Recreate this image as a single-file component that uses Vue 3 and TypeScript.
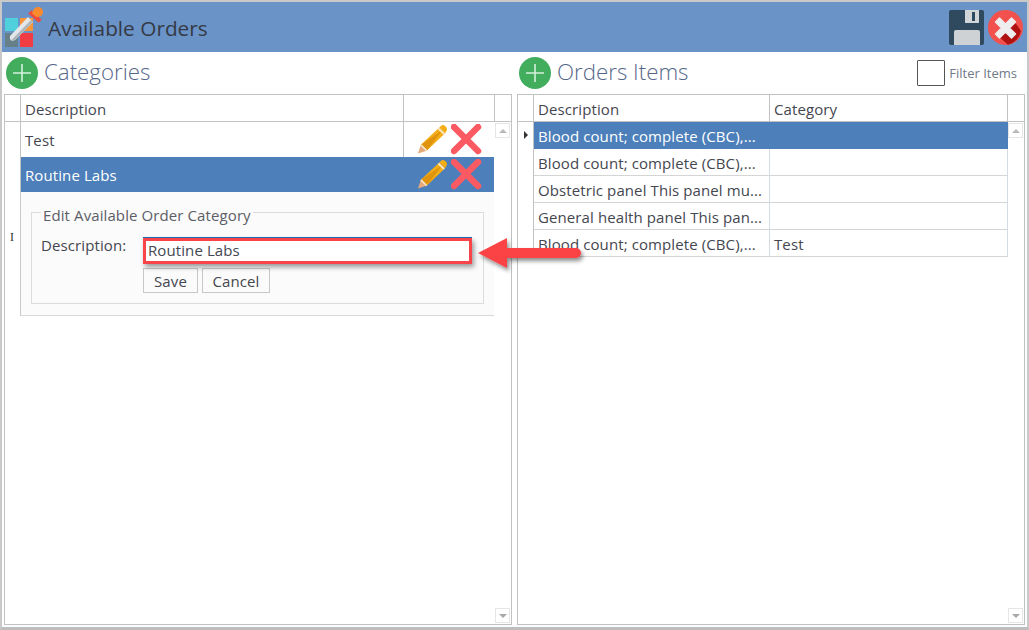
<script setup lang="ts">
const categories = ['Test', 'Routine Labs']
const orders = [
  { d: 'Blood count; complete (CBC),...', c: '', sel: true },
  { d: 'Blood count; complete (CBC),...', c: '', sel: false },
  { d: 'Obstetric panel This panel mu...', c: '', sel: false },
  { d: 'General health panel This pan...', c: '', sel: false },
  { d: 'Blood count; complete (CBC),...', c: 'Test', sel: false },
]
</script>

<template>
  <div class="window">
    <header class="titlebar">
      <svg class="logo" width="42" height="44" viewBox="0 0 42 44">
        <rect x="3" y="13" width="13" height="13" fill="#4fd0dc" />
        <rect x="18" y="13" width="13" height="13" fill="#f9953a" />
        <rect x="3" y="28" width="13" height="14" fill="#66808a" />
        <rect x="18" y="28" width="13" height="14" fill="#f23c44" />
        <path d="M8 31 L26 12 L31 17 L13 35 Q10 36.500 8.500 35 Q7.500 33 8 31 Z" fill="#e4e7ea" />
        <path d="M29 15 L31 17 L13 35 Q10.500 36.300 9 35.500 Z" fill="#aeb6bc" />
        <path d="M27 8 L39 15" stroke="#ee4b3e" stroke-width="4.500" transform="rotate(12 33 11.500)" />
        <circle cx="36" cy="7" r="5" fill="#f98a2d" />
        <path d="M29.500 8 L35 2.500 L40 8 L35 12 Z" fill="#f98a2d" />
      </svg>
      <h1 class="app-title">Available Orders</h1>
      <div class="title-actions">
        <svg width="36" height="35" viewBox="0 0 36 35">
          <path d="M2 0 H33 A2 2 0 0 1 35 2 V33 A2 2 0 0 1 33 35 H2 A2 2 0 0 1 0 33 V2 A2 2 0 0 1 2 0 Z" fill="#2f4a5e" />
          <rect x="16" y="0" width="14" height="13" fill="#d3d6d8" />
          <rect x="23" y="2" width="3" height="9" fill="#2f4a5e" />
          <path d="M5 35 V22 Q5 20 7 20 H29 Q31 20 31 22 V35 Z" fill="#cfd2d4" />
        </svg>
        <svg width="35" height="35" viewBox="0 0 35 35">
          <circle cx="17.500" cy="17.500" r="17.500" fill="#f2514e" />
          <path d="M24 8 L33 21 A17.500 17.500 0 0 1 20 34.800 L9 25 Z" fill="#b01212" />
          <path d="M11.500 8 L17.500 14 L23.500 8 L27.500 12 L21.500 18 L27.500 24 L23.500 28 L17.500 22 L11.500 28 L7.500 24 L13.500 18 L7.500 12 Z" fill="#eeeeee" stroke="#eeeeee" stroke-width="1.500" stroke-linejoin="round" />
        </svg>
      </div>
    </header>

    <main class="panels">
      <section class="panel">
        <div class="panel-head">
          <svg class="add" width="32" height="32" viewBox="0 0 32 32">
            <circle cx="16" cy="16" r="16" fill="#41ad5d" />
            <path d="M16 7 V25 M7 16 H25" stroke="#d5efdc" stroke-width="1.600" />
          </svg>
          <h2 class="panel-title">Categories</h2>
        </div>
        <div class="grid">
          <div class="grid-body">
            <div class="head-row cat-cols">
              <div class="indicator"></div>
              <div class="hcell">Description</div>
              <div class="hcell"></div>
              <div class="hcell last"></div>
            </div>
            <div
              v-for="(c, i) in categories"
              :key="c"
              class="cat-row"
              :class="{ selected: i === 1 }"
            >
              <div class="indicator plain"></div>
              <div class="cat-text">{{ c }}</div>
              <div class="cat-actions" :class="{ divided: i === 0 }">
                <svg width="31" height="31" viewBox="0 0 32 31">
                  <path d="M1 30 L4 21 L10 27 Z" fill="#e5a97c" />
                  <path d="M4 21 L23 3 L29 9 L10 27 Z" fill="#f3ad16" />
                  <path d="M4 21 L26 6 L10 27 Z" fill="#e0930c" />
                  <path d="M23 3 L25.500 0.800 Q27 0 28.500 1 L30.500 3 Q31.500 5 30.500 6.500 L29 9 Z" fill="#f3ad16" />
                  <path d="M22 4 L28 10" stroke="#f7e8c8" stroke-width="2" />
                  <path d="M4 21 L10 27" stroke="#f7e8c8" stroke-width="1.600" />
                </svg>
                <svg width="31" height="31" viewBox="0 0 31 31">
                  <path d="M3 3 L27 27 M27 3 L3 27" stroke="#fb5a62" stroke-width="6.500" stroke-linecap="round" />
                </svg>
              </div>
              <div class="cat-spacer"></div>
            </div>
            <div class="detail">
              <fieldset class="edit-box">
                <legend>Edit Available Order Category</legend>
                <div class="edit-form">
                  <label class="edit-label" for="desc">Description:</label>
                  <div class="edit-fields">
                    <input id="desc" class="edit-input" value="Routine Labs" />
                    <div class="edit-buttons">
                      <button class="btn save">Save</button>
                      <button class="btn cancel">Cancel</button>
                    </div>
                  </div>
                </div>
              </fieldset>
            </div>
          </div>
          <div class="scrollbar">
            <span class="sbtn"><i class="tri up"></i></span>
            <span class="sbtn"><i class="tri down"></i></span>
          </div>
        </div>
      </section>

      <section class="panel">
        <div class="panel-head">
          <svg class="add" width="32" height="32" viewBox="0 0 32 32">
            <circle cx="16" cy="16" r="16" fill="#41ad5d" />
            <path d="M16 7 V25 M7 16 H25" stroke="#d5efdc" stroke-width="1.600" />
          </svg>
          <h2 class="panel-title">Orders Items</h2>
          <label class="filter">
            <span class="check"></span>
            <span>Filter Items</span>
          </label>
        </div>
        <div class="grid">
          <div class="grid-body">
            <div class="head-row order-cols">
              <div class="indicator"></div>
              <div class="hcell">Description</div>
              <div class="hcell">Category</div>
              <div class="hcell last"></div>
            </div>
            <div
              v-for="(o, i) in orders"
              :key="i"
              class="order-row order-cols"
              :class="{ selected: o.sel }"
            >
              <div class="indicator plain">
                <i v-if="o.sel" class="current"></i>
              </div>
              <div class="ocell">{{ o.d }}</div>
              <div class="ocell">{{ o.c }}</div>
            </div>
          </div>
          <div class="scrollbar">
            <span class="sbtn"><i class="tri up"></i></span>
            <span class="sbtn"><i class="tri down"></i></span>
          </div>
        </div>
      </section>
    </main>

    <!-- annotation overlay -->
    <span class="ibeam">I</span>
    <div class="callout-box"></div>
    <svg class="callout-arrow" width="120" height="44" viewBox="0 0 120 44">
      <defs>
        <filter id="sh" x="-10%" y="-20%" width="125%" height="160%">
          <feDropShadow dx="2" dy="3" stdDeviation="2" flood-color="#000" flood-opacity="0.45" />
        </filter>
      </defs>
      <path d="M4 19 L33 4 V14 H102 A5 5 0 0 1 102 24 H33 V34 Z" fill="#fb4245" filter="url(#sh)" />
    </svg>
  </div>
</template>

<style>
html, body { margin: 0; padding: 0; background: #fff; }
</style>

<style scoped>
.window {
  position: relative;
  width: 1029px;
  height: 630px;
  box-sizing: border-box;
  border: 2px solid #c9c9c9;
  border-bottom: 3px solid #bdbdbd;
  background: #fff;
  overflow: hidden;
  display: flex;
  flex-direction: column;
  font-family: "Open Sans", "Noto Sans", sans-serif;
  color: #44474f;
}
.titlebar {
  height: 50px;
  flex: none;
  background: #6a93c8;
  display: flex;
  align-items: center;
}
.logo { flex: none; margin: 0 4px 0 0; }
.app-title {
  margin: 1px 0 0;
  font-size: 20.800px;
  font-weight: 400;
  color: #353a44;
}
.title-actions {
  margin-left: auto;
  display: flex;
  align-items: center;
  gap: 3px;
  padding: 1px 4px 0 0;
}
.panels {
  flex: 1;
  min-height: 0;
  display: flex;
  gap: 5px;
  padding: 0 0 2px 2px;
}
.panel {
  width: 508px;
  flex: none;
  display: flex;
  flex-direction: column;
}
.panel-head {
  height: 42px;
  flex: none;
  display: flex;
  align-items: center;
  padding-left: 2px;
}
.add { flex: none; }
.panel-title {
  margin: -4px 0 0 6px;
  font-size: 22.300px;
  font-weight: 300;
  color: #56688a;
}
.filter {
  margin-left: auto;
  display: flex;
  align-items: center;
  gap: 4px;
  font-size: 13px;
  color: #6f7a88;
  padding-right: 8px;
}
.check {
  width: 26px;
  height: 24px;
  border: 1px solid #555;
  border-radius: 1px;
  background: #fff;
}
.grid {
  flex: 1;
  min-height: 0;
  border: 1px solid #c2c2c2;
  display: flex;
  position: relative;
}
.grid-body { flex: 1; min-width: 0; display: flex; flex-direction: column; }
.head-row {
  height: 27px;
  flex: none;
  display: flex;
  box-sizing: border-box;
  border-bottom: 1px solid #c2c2c2;
}
.indicator { width: 15px; flex: none; border-right: 1px solid #c2c2c2; box-sizing: content-box; }
.indicator.plain { position: relative; }
.hcell {
  box-sizing: border-box;
  padding: 4px 0 0 4px;
  font-size: 15px;
  letter-spacing: 0.1px;
  line-height: 20px;
  border-right: 1px solid #c2c2c2;
  white-space: nowrap;
}
.cat-cols .hcell:nth-child(2) { width: 383px; }
.cat-cols .hcell:nth-child(3) { width: 91px; }
.hcell.last { flex: 1; border-right: none; }
.cat-row {
  height: 35px;
  flex: none;
  display: flex;
  align-items: stretch;
  font-size: 15px;
  letter-spacing: 0.1px;
}
.cat-text { width: 383px; box-sizing: border-box; padding: 8px 0 0 4px; line-height: 20px; }
.cat-actions {
  width: 90px;
  box-sizing: border-box;
  display: flex;
  align-items: center;
  padding-left: 13px;
  gap: 3px;
}
.cat-actions.divided { border-left: 1px solid #c2c2c2; margin-left: -1px; width: 91px; }
.cat-row.selected .cat-text,
.cat-row.selected .cat-actions { background: #4d7fba; color: #fff; }
.detail {
  height: 124px;
  width: 474px;
  margin-left: 15px;
  flex: none;
  box-sizing: border-box;
  background: #fbfbfb;
  border-left: 1px solid #c9c9c9;
  border-bottom: 1px solid #d8d8d8;
  padding: 7px 10px 0 10px;
}
.edit-box {
  margin: 0;
  padding: 0 0 0 9px;
  height: 105px;
  box-sizing: border-box;
  border: 1px solid #dcdcdc;
  min-width: 0;
}
.edit-box legend {
  margin-left: 0;
  padding: 6px 2px 0;
  font-size: 15px;
  letter-spacing: 0.1px;
  line-height: 20px;
  color: #5b5e66;
}
.edit-form { display: flex; }
.edit-label {
  width: 102px;
  flex: none;
  font-size: 15px;
  line-height: 20px;
  padding-top: 10px;
  letter-spacing: 0.1px;
}
.edit-fields { display: flex; flex-direction: column; gap: 4px; padding-top: 12px; }
.edit-input {
  width: 329px;
  height: 27px;
  box-sizing: border-box;
  border: none;
  border-top: 2px solid #1f6fc0;
  padding: 0 0 3px 5px;
  margin: 0;
  background: #fff;
  font: inherit;
  font-size: 15px;
  letter-spacing: 0.1px;
  color: #44474f;
  outline: none;
}
.edit-buttons { display: flex; gap: 4px; }
.btn {
  height: 25px;
  box-sizing: border-box;
  border: 1px solid #c8c8c8;
  background: #fbfbfb;
  font: inherit;
  font-size: 15px;
  letter-spacing: 0.1px;
  line-height: 20px;
  color: #44474f;
  padding: 0;
}
.btn.save { width: 55px; }
.btn.cancel { width: 68px; }
.scrollbar {
  position: absolute;
  right: 1px;
  top: 28px;
  bottom: 1px;
  width: 15px;
  display: flex;
  flex-direction: column;
  justify-content: space-between;
}
.sbtn {
  width: 15px;
  height: 15px;
  box-sizing: border-box;
  border: 1px solid #e6e6e6;
  display: flex;
  align-items: center;
  justify-content: center;
  background: #fff;
}
.tri { width: 0; height: 0; border-left: 4px solid transparent; border-right: 4px solid transparent; }
.tri.up { border-bottom: 4px solid #b9b9b9; }
.tri.down { border-top: 4px solid #a8a8a8; }
.order-cols { display: flex; }
.order-cols .hcell:nth-child(2),
.order-row .ocell:nth-child(2) { width: 236px; }
.order-cols .hcell:nth-child(3),
.order-row .ocell:nth-child(3) { width: 238px; }
.order-row {
  height: 27px;
  box-sizing: border-box;
  flex: none;
  font-size: 15px;
  letter-spacing: 0.1px;
}
.ocell {
  box-sizing: border-box;
  padding: 3px 0 0 4px;
  line-height: 22px;
  white-space: nowrap;
  border-right: 1px solid #d4dbe4;
  border-bottom: 1px solid #d5d5d5;
}
.order-row.selected .ocell {
  background: #4d7fba;
  color: #fff;
  border-color: #4d7fba;
}
.current {
  position: absolute;
  left: 6px;
  top: 9px;
  width: 0;
  height: 0;
  border-top: 4px solid transparent;
  border-bottom: 4px solid transparent;
  border-left: 4px solid #333;
}
.ibeam {
  position: absolute;
  left: 8px;
  top: 228px;
  font-family: "Liberation Serif", serif;
  font-size: 12px;
  line-height: 14px;
  color: #333;
}
.callout-box {
  position: absolute;
  left: 141px;
  top: 236px;
  width: 329px;
  height: 26px;
  box-sizing: border-box;
  border: 3px solid #f9444a;
  box-shadow: 2px 3px 5px rgba(0, 0, 0, 0.4);
}
.callout-arrow {
  position: absolute;
  left: 472px;
  top: 232px;
}
</style>
